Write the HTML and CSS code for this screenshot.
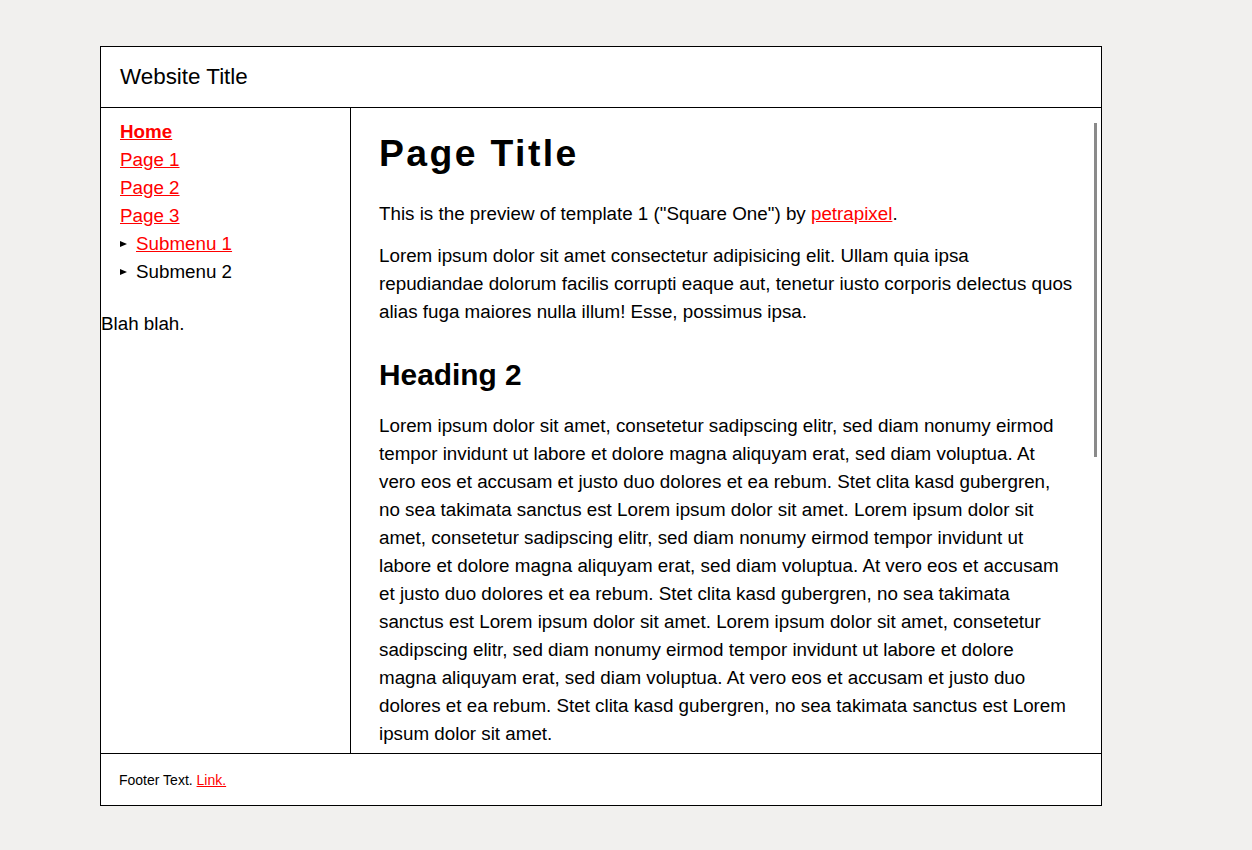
FILE: index.html
```html
<!DOCTYPE html>
<html lang="en">
<head>
  <meta charset="UTF-8" />
  <meta name="viewport" content="width=device-width, initial-scale=1.0" />
  <title>Square One</title>
  <link rel="stylesheet" href="styles.css">
</head>
<body>
  <div class="layout">
    <header class="site-header">Website Title</header>

    <aside class="sidebar">
      <nav class="side-nav">
        <ul>
          <li><a href="#" class="active">Home</a></li>
          <li><a href="#">Page 1</a></li>
          <li><a href="#">Page 2</a></li>
          <li><a href="#">Page 3</a></li>
          <li>
            <details>
              <summary><a href="#">Submenu 1</a></summary>
            </details>
          </li>
          <li>
            <details>
              <summary>Submenu 2</summary>
            </details>
          </li>
        </ul>
      </nav>
      <p>Blah blah.</p>
    </aside>

    <div class="content-wrap">
      <main class="content">
        <h1>Page Title</h1>
        <p>This is the preview of template 1 ("Square One") by <a href="#">petrapixel</a>.</p>
        <p>Lorem ipsum dolor sit amet consectetur adipisicing elit. Ullam quia ipsa repudiandae dolorum facilis corrupti eaque aut, tenetur iusto corporis delectus quos alias fuga maiores nulla illum! Esse, possimus ipsa.</p>

        <h2>Heading 2</h2>
        <p>Lorem ipsum dolor sit amet, consetetur sadipscing elitr, sed diam nonumy eirmod tempor invidunt ut labore et dolore magna aliquyam erat, sed diam voluptua. At vero eos et accusam et justo duo dolores et ea rebum. Stet clita kasd gubergren, no sea takimata sanctus est Lorem ipsum dolor sit amet. Lorem ipsum dolor sit amet, consetetur sadipscing elitr, sed diam nonumy eirmod tempor invidunt ut labore et dolore magna aliquyam erat, sed diam voluptua. At vero eos et accusam et justo duo dolores et ea rebum. Stet clita kasd gubergren, no sea takimata sanctus est Lorem ipsum dolor sit amet. Lorem ipsum dolor sit amet, consetetur sadipscing elitr, sed diam nonumy eirmod tempor invidunt ut labore et dolore magna aliquyam erat, sed diam voluptua. At vero eos et accusam et justo duo dolores et ea rebum. Stet clita kasd gubergren, no sea takimata sanctus est Lorem ipsum dolor sit amet.</p>

        <h2>Heading 2</h2>
        <p>Lorem ipsum dolor sit amet, consetetur sadipscing elitr, sed diam nonumy eirmod tempor invidunt ut labore et dolore magna aliquyam erat, sed diam voluptua. At vero eos et accusam et justo duo dolores et ea rebum. Stet clita kasd gubergren, no sea takimata sanctus est Lorem ipsum dolor sit amet. Lorem ipsum dolor sit amet, consetetur sadipscing elitr, sed diam nonumy eirmod tempor invidunt ut labore et dolore magna aliquyam erat, sed diam voluptua. At vero eos et accusam et justo duo dolores et ea rebum.</p>
      </main>
      <div class="scroll-thumb"></div>
    </div>

    <footer class="site-footer">
      <span>Footer Text. <a href="#">Link.</a></span>
    </footer>
  </div>
</body>
</html>
```

FILE: styles.css
```css
* {
  box-sizing: border-box;
}

body {
  margin: 0;
  background-color: #f1f0ee;
  color: #000;
  font-family: "Liberation Sans", Arial, sans-serif;
  font-size: 18.8px;
  line-height: 28px;
}

a {
  color: #f00;
}

.layout {
  width: 1002px;
  height: 760px;
  margin: 46px 0 0 100px;
  background: white;
  border: 1px solid #000;
  display: grid;
  grid-template-columns: 250px 1fr;
  grid-template-rows: 61px 1fr 52px;
}

.site-header {
  grid-column: 1 / 3;
  border-bottom: 1px solid #000;
  display: flex;
  align-items: center;
  padding: 0 19px;
  font-size: 22.4px;
  line-height: normal;
}

.sidebar {
  border-right: 1px solid #000;
  min-height: 0;
}

.side-nav {
  padding: 10px 19px;
}

.side-nav ul {
  list-style: none;
  margin: 0;
  padding: 0;
}

.side-nav a.active {
  font-weight: bold;
}

.side-nav summary {
  list-style: none;
  cursor: pointer;
}

.side-nav summary::-webkit-details-marker {
  display: none;
}

.side-nav summary::before {
  content: "";
  display: inline-block;
  border-left: 7px solid #000;
  border-top: 3.5px solid transparent;
  border-bottom: 3.5px solid transparent;
  margin-right: 9px;
  vertical-align: 3px;
}

.sidebar p {
  margin: 14px 0;
}

/* scrollable main column, thumb drawn on top */
.content-wrap {
  position: relative;
  min-height: 0;
}

.content {
  height: 100%;
  overflow-y: auto;
  scrollbar-width: none;
  padding: 24px 28px 28px 28px;
}

.content::-webkit-scrollbar {
  display: none;
}

.scroll-thumb {
  position: absolute;
  top: 15px;
  right: 4px;
  width: 3px;
  height: 334px;
  background-color: #8a8a8a;
}

.content h1 {
  margin: 0 0 25px;
  font-size: 37.33px;
  letter-spacing: 2.4px;
  line-height: 1.15;
}

.content h2 {
  margin: 32px 0 20px;
  font-size: 29.87px;
  line-height: 1.15;
}

.content p {
  margin: 14px 0;
}

.site-footer {
  grid-column: 1 / 3;
  border-top: 1px solid #000;
  display: flex;
  align-items: center;
  padding: 0 18px;
  font-size: 14px;
  line-height: normal;
}
```
